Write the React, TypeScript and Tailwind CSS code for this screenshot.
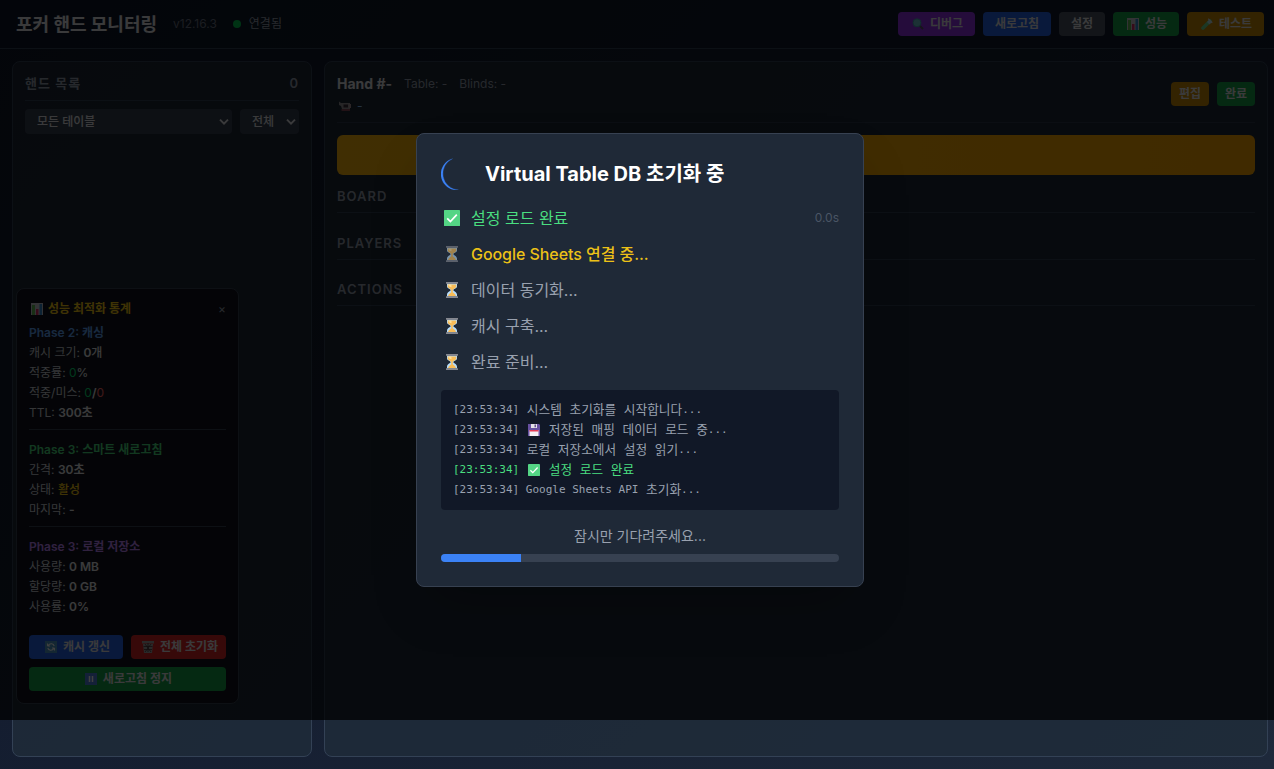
import React from "react";

const Glass = ({ dim }: { dim?: boolean }) => (
  <svg viewBox="0 0 18 18" className={dim ? "w-[18px] h-[18px] shrink-0 opacity-60" : "w-[18px] h-[18px] shrink-0"}>
    <path d="M4 2.500h10v2.900c0 2-3.600 2.400-3.600 3.600s3.600 2.200 3.600 4.400v2H4v-2c0-2.200 3.600-3.200 3.600-4.400S4 7.400 4 5.400z" fill="#b5dcfb" />
    <path d="M4.700 3.500h8.600v2c0 1.800-3.200 2.200-3.600 3.500H8.300C7.900 7.700 4.700 7.300 4.700 5.500zM8.200 8.500h1.600v3c1.500.6 2.900 2 3.200 3.500H5c.3-1.500 1.700-2.900 3.200-3.500z" fill="#f9bd58" />
    <path d="M5.500 3.500h3v2.700C7 6 5.700 5.400 5.500 4.500z" fill="#ffe09a" />
    <path d="M3 1h12v1.700H3zM3 15.300h12V17H3z" fill="#85878f" />
  </svg>
);
const Check = ({ className }: { className: string }) => (
  <svg viewBox="0 0 16 16" className={className}>
    <rect width="16" height="16" rx="0.600" fill="#54d585" />
    <path d="M3.200 8.400l3.200 3.200 6.400-7" fill="none" stroke="#fff" strokeWidth="1.700" />
  </svg>
);
const Disk = () => (
  <svg viewBox="0 0 12 12" className="h-3 w-3">
    <path d="M0 0h11l1 1v11H0z" fill="#6650a0" />
    <path d="M3 0h6v4H3z" fill="#e3e2e7" />
    <path d="M6.500.5H8v2.800H6.500z" fill="#65518c" />
    <path d="M1.500 6h9v6h-9z" fill="#f3eff3" />
    <path d="M1.500 6h9v1.500h-9z" fill="#e33b55" />
  </svg>
);
const Chart = () => (
  <svg viewBox="0 0 12 12" className="h-3 w-3 shrink-0">
    <rect width="12" height="12" fill="#c9ccd2" />
    <path d="M1 2h3v10H1z" fill="#62ba55" />
    <path d="M5 6h2.500v6H5z" fill="#d82f68" />
    <path d="M8.500 1H11v11H8.500z" fill="#348ace" />
  </svg>
);
const Lens = () => (
  <svg viewBox="0 0 12 12" className="h-3 w-3 shrink-0">
    <path d="M7 7l4 4" stroke="#5a5463" strokeWidth="2" />
    <circle cx="5" cy="4.800" r="4" fill="#6fc4d2" stroke="#45a5b3" />
  </svg>
);
const Tube = () => (
  <svg viewBox="0 0 12 12" className="h-3 w-3 shrink-0">
    <path d="M2 10L9 3" stroke="#6fe094" strokeWidth="3.600" strokeLinecap="round" />
    <path d="M6 4l2-2 2.500 2.500-2 2z" fill="#b9ecf2" />
    <path d="M7.200.7l4 4" stroke="#dce6f0" strokeWidth="1.300" />
  </svg>
);
const Camera = () => (
  <svg viewBox="0 0 12 12" className="h-3 w-3 shrink-0">
    <path d="M0 1.500l2 1.500h9v6H3L2 6 0 5z" fill="#969399" />
    <path d="M2.500 9H11v2H2.500z" fill="#874957" />
    <path d="M4.500 4.500H9v3H4.500z" fill="#382d3b" />
    <path d="M10 4h2v4h-2z" fill="#b1979b" />
  </svg>
);
const Sync = () => (
  <svg viewBox="0 0 12 12" className="h-3 w-3 shrink-0">
    <rect width="12" height="12" fill="#4f9cc8" />
    <path d="M2.500 5V2.500M2.500 5h2.600M3 4.600C5 1.700 8.500 2.500 9.200 5M9.500 7v2.500M9.500 7H7M9 7.400C7 10.300 3.500 9.500 2.800 7" fill="none" stroke="#fff" strokeWidth="1.100" />
  </svg>
);
const Trash = () => (
  <svg viewBox="0 0 12 12" className="h-3 w-3 shrink-0">
    <path d="M0 0h12v2.500H0zM1 3h10l-1 9H2z" fill="#a5a4a5" />
    <path d="M3 3l6 8M9 3l-6 8M6 2v9M1.500 5.500h9M2 8.500h8" stroke="#4a3637" strokeWidth=".8" />
  </svg>
);
const Pause = () => (
  <svg viewBox="0 0 12 12" className="h-3 w-3 shrink-0">
    <rect width="12" height="12" fill="#4f80e0" />
    <path d="M4.500 3v6M7.500 3v6" stroke="#fff" strokeWidth="1.500" />
  </svg>
);
const Chevron = () => (
  <svg viewBox="0 0 10 8" className="h-2 w-[10px]">
    <path d="M1 1.700l4 4 4-4" fill="none" stroke="#e5e7eb" strokeWidth="1.900" />
  </svg>
);

const btn = "flex h-6 items-center justify-center gap-[6px] whitespace-nowrap rounded text-[12px] font-semibold text-gray-200";

function Row({ label, children }: { label: string; children: React.ReactNode }) {
  return (
    <div className="h-5 whitespace-nowrap text-gray-300">
      {label}: <span className="font-semibold text-gray-200">{children}</span>
    </div>
  );
}

function LogLine({ icon, text, green }: { icon?: React.ReactNode; text: string; green?: boolean }) {
  return (
    <div className={green ? "flex h-5 items-center whitespace-pre text-[#4ade80]" : "flex h-5 items-center whitespace-pre text-gray-400"}>
      <span>[23:53:34] </span>
      {icon && <span className="mr-[8px] ml-[2px]">{icon}</span>}
      {text.split(/([가-힣]+)/).filter(Boolean).map((part, i) =>
        /[가-힣]/.test(part) ? (
          <span key={i} className="-mt-[2px] ml-px font-['Noto_Sans_CJK_KR',sans-serif] text-[12.700px] font-normal">{part}</span>
        ) : (
          <span key={i}>{part}</span>
        )
      )}
    </div>
  );
}

function Step({ icon, text, color, time }: { icon: React.ReactNode; text: string; color: string; time?: string }) {
  return (
    <div className="flex h-6 items-center">
      <div className="flex w-[22px] justify-center">{icon}</div>
      <span className={"ml-2 flex-1 text-[16px] " + color}>{text}</span>
      {time && <span className="text-[12px] text-gray-600">{time}</span>}
    </div>
  );
}

function Section({ title }: { title: string }) {
  return <div className="h-[25px] border-b border-[#334155] text-[13px] leading-4 font-semibold tracking-[1px] text-gray-400">{title}</div>;
}

export default function App() {
  return (
    <div className="relative flex h-[769px] w-full flex-col overflow-hidden bg-linear-135 from-[#0f172a] to-[#1e293b] font-[Inter,'Noto_Sans_CJK_KR',sans-serif] text-gray-200">
      <header className="flex h-[49px] shrink-0 items-center border-b border-[#334155] bg-[#0f172a]/60 pr-[10px] pl-4">
        <h1 className="w-[141px] text-[18px] font-bold whitespace-nowrap">포커 핸드 모니터링</h1>
        <span className="ml-4 text-[12px] text-gray-500">v12.16.3</span>
        <span className="ml-4 h-2 w-2 rounded-full bg-green-500" />
        <span className="ml-2 text-[12px] text-gray-400">연결됨</span>
        <div className="ml-auto flex gap-2">
          <div className={btn + " w-[77px] bg-[#9333ea] pl-[2px]"}><Lens />디버그</div>
          <div className={btn + " w-[68px] bg-[#2563eb]"}>새로고침</div>
          <div className={btn + " w-[46px] bg-[#4b5563]"}>설정</div>
          <div className={btn + " w-[66px] bg-[#16a34a] pl-[2px]"}><Chart />성능</div>
          <div className={btn + " w-[77px] bg-[#ca8a04] pl-[2px]"}><Tube />테스트</div>
        </div>
      </header>

      <main className="flex min-h-0 flex-1 gap-3 pt-3 pr-[6px] pb-3 pl-3">
        <aside className="w-[300px] shrink-0 rounded-lg border border-[#334155] bg-[#1f2c39]/80 px-3">
          <div className="flex h-[39px] items-center justify-between border-b border-[#334155] pt-[5px] text-[13px] font-semibold text-gray-400">
            <span className="tracking-[1px]">핸드 목록</span>
            <span className="tracking-[1px]">0</span>
          </div>
          <div className="mt-2 flex gap-2 text-[12px] font-medium text-gray-200">
            <div className="flex h-[25px] w-[207px] items-center justify-between rounded bg-[#374151] pr-[3px] pl-3">모든 테이블<Chevron /></div>
            <div className="flex h-[25px] w-[59px] items-center justify-between rounded bg-[#374151] pr-[3px] pl-3">전체<Chevron /></div>
          </div>
        </aside>

        <section className="min-w-0 flex-1 rounded-lg border border-[#334155] bg-[#1f2c39]/80 px-3">
          <div className="flex h-[61px] items-center justify-between border-b border-[#2c3a4d]">
            <div className="pt-[2px]">
              <div className="flex h-6 items-center gap-3 text-[12px] text-gray-400">
                <span className="text-[14px] font-bold text-gray-200">Hand #-</span>
                <span className="pt-px">Table: -</span>
                <span className="pt-px">Blinds: -</span>
              </div>
              <div className="flex h-5 items-center gap-[6px] pt-px pl-[2px] text-[12px] text-blue-300"><Camera />-</div>
            </div>
            <div className="flex gap-2 pt-[3px]">
              <div className={btn + " w-[38px] bg-[#ca8a04]"}>편집</div>
              <div className={btn + " w-[38px] bg-[#16a34a]"}>완료</div>
            </div>
          </div>
          <div className="mt-3 h-10 rounded-md bg-linear-90 from-[#ffb80c] to-[#ffa800]" />
          <div className="mt-[13.400px] flex flex-col gap-[21.500px]">
            <Section title="BOARD" />
            <Section title="PLAYERS" />
            <Section title="ACTIONS" />
          </div>
        </section>
      </main>

      <div className="absolute top-[288px] left-4 h-[416px] w-[223px] rounded-lg border border-[#374151] bg-[#10131c] px-3 pt-[10px] text-[12px] leading-5">
        <div className="flex h-5 items-center">
          <span className="ml-[2px]"><Chart /></span>
          <span className="ml-[5px] font-bold text-[#facc15]">성능 최적화 통계</span>
          <span className="ml-auto text-gray-400">×</span>
        </div>
        <div className="mt-1 font-semibold text-[#60a5fa]">Phase 2: 캐싱</div>
        <Row label="캐시 크기">0<span className="font-medium">개</span></Row>
        <Row label="적중률"><span className="font-normal text-green-400">0</span><span className="font-normal">%</span></Row>
        <Row label="적중/미스"><span className="font-normal text-green-400">0</span>/<span className="font-normal text-red-400">0</span></Row>
        <Row label="TTL">300초</Row>
        <div className="mt-[6px] border-t border-[#374151] pt-[10px] font-semibold text-[#4ade80]">Phase 3: 스마트 새로고침</div>
        <Row label="간격">30초</Row>
        <Row label="상태"><span className="font-medium text-[#facc15]">활성</span></Row>
        <Row label="마지막">-</Row>
        <div className="mt-[6px] border-t border-[#374151] pt-[10px] font-semibold text-[#c084fc]">Phase 3: 로컬 저장소</div>
        <Row label="사용량">0 MB</Row>
        <Row label="할당량">0 GB</Row>
        <Row label="사용률">0%</Row>
        <div className="mt-[18px] flex gap-2">
          <div className={btn + " w-[94px] bg-[#2563eb] pl-[3px]"}><Sync />캐시 갱신</div>
          <div className={btn + " w-[95px] bg-[#dc2626] pl-[3px]"}><Trash />전체 초기화</div>
        </div>
        <div className={btn + " mt-2 bg-[#16a34a] pl-[2px]"}><Pause />새로고침 정지</div>
      </div>

      <div className="absolute top-0 left-0 flex h-[720px] w-full items-center justify-center bg-black/75 pl-[6px]">
        <div className="h-[454px] w-[448px] rounded-lg border border-[#374151] bg-[#1f2937] px-6 pt-6 shadow-2xl">
          <div className="flex h-8 items-center">
            <svg viewBox="0 0 32 32" className="h-8 w-8">
              <path d="M11.500.7A16 16 0 0 0 17.500 32A16.400 16.400 0 0 1 11.500.7z" fill="#3b82f6" stroke="#3b82f6" strokeWidth=".25" />
            </svg>
            <h2 className="ml-3 text-[20px] font-bold text-white">Virtual Table DB 초기화 중</h2>
          </div>
          <div className="mt-4 flex flex-col gap-3">
            <Step icon={<Check className="h-4 w-4" />} text="설정 로드 완료" color="text-[#4ade80]" time="0.0s" />
            <Step icon={<Glass dim />} text="Google Sheets 연결 중..." color="font-medium tracking-[-0.060px] text-[#facc15]/95" />
            <Step icon={<Glass />} text="데이터 동기화..." color="text-gray-400" />
            <Step icon={<Glass />} text="캐시 구축..." color="text-gray-400" />
            <Step icon={<Glass />} text="완료 준비..." color="text-gray-400" />
          </div>
          <div className="mt-4 h-[120px] rounded bg-[#111827] px-3 pt-[10px] font-['DejaVu_Sans_Mono','Noto_Sans_CJK_KR',monospace] text-[11px]">
            <LogLine text="시스템 초기화를 시작합니다..." />
            <LogLine icon={<Disk />} text="저장된 매핑 데이터 로드 중..." />
            <LogLine text="로컬 저장소에서 설정 읽기..." />
            <LogLine green icon={<Check className="h-3 w-3" />} text="설정 로드 완료" />
            <LogLine text="Google Sheets API 초기화..." />
          </div>
          <div className="mt-4 text-center text-[14px] leading-5 text-gray-400">잠시만 기다려주세요...</div>
          <div className="mt-2 h-2 overflow-hidden rounded-full bg-[#374151]">
            <div className="h-full w-1/5 bg-[#3b82f6]" />
          </div>
        </div>
      </div>
    </div>
  );
}
